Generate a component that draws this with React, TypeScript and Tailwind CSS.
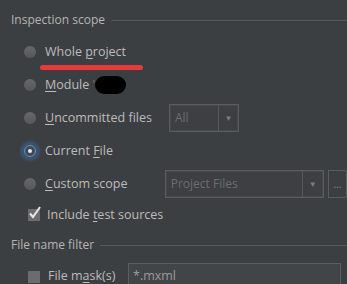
import React from "react";

const font = { fontFamily: '"Open Sans", "Noto Sans", sans-serif' };

function Radio({ selected }: { selected?: boolean }) {
  if (selected) {
    return (
      <div className="relative w-[12px] h-[12px] shrink-0">
        <div className="absolute -inset-[4px] rounded-full bg-[#3a5675] opacity-90 blur-[1px]" />
        <div className="absolute inset-0 rounded-full bg-[#3e4a57] border border-[#6f8fb3] flex items-center justify-center">
          <div className="w-[4px] h-[4px] rounded-full bg-[#e8e8e8]" />
        </div>
      </div>
    );
  }
  return (
    <div className="w-[12px] h-[12px] shrink-0 rounded-full bg-gradient-to-b from-[#666869] to-[#555759]" />
  );
}

function U({ children }: { children: React.ReactNode }) {
  return <span className="underline underline-offset-[2px] decoration-[1px]">{children}</span>;
}

function Dropdown({ label, width, arrowW }: { label: string; width: number; arrowW: number }) {
  return (
    <div
      className="flex h-[28px] border border-[#5a5d60] shadow-[inset_0_0_0_1px_#46494b] bg-[#3d3f42]"
      style={{ width }}
    >
      <div className="flex-1 flex items-center pl-[5px] text-[12px] text-[#6b6d70] border-r border-[#55585b]">
        {label}
      </div>
      <div className="flex items-center justify-center text-[8px] text-[#7a7c7f]" style={{ width: arrowW }}>
        ▼
      </div>
    </div>
  );
}

export default function App() {
  return (
    <div
      className="relative w-[347px] h-[284px] overflow-hidden bg-[#3c3f41] text-[#bcbcbc] text-[12.5px] leading-[16px]"
      style={font}
    >
      {/* Header */}
      <div className="flex items-center pt-[12px] pl-[11px]">
        <span className="text-[12px] text-[#b5b5b5]">Inspection scope</span>
        <div className="flex-1 ml-[6px] h-px bg-[#55585a]" />
      </div>

      <div className="flex flex-col mt-[7px] pl-[24px]">
        <div className="h-[33px] flex items-center gap-[9px]">
          <Radio />
          <span>
            Whole <U>p</U>roject
          </span>
        </div>
        <div className="h-[33px] flex items-center gap-[9px]">
          <Radio />
          <span>
            <U>M</U>odule <span className="text-[#777]">'</span>
          </span>
        </div>
        <div className="h-[33px] flex items-center gap-[9px]">
          <Radio />
          <span className="w-[115px]">
            <U>U</U>ncommitted files
          </span>
          <Dropdown label="All" width={70} arrowW={19} />
        </div>
        <div className="h-[33px] flex items-center gap-[9px]">
          <Radio selected />
          <span>
            Current <U>F</U>ile
          </span>
        </div>
        <div className="h-[33px] flex items-center gap-[9px]">
          <Radio />
          <span className="w-[115px]">
            <U>C</U>ustom scope
          </span>
          <Dropdown label="Project Files" width={165} arrowW={20} />
          <div className="h-[28px] w-[20px] -ml-[5px] border border-[#5a5d60] flex items-center justify-center text-[10px] text-[#888]">
            …
          </div>
        </div>
        <div className="h-[29px] flex items-center gap-[7px] pl-[4px]">
          <div className="relative w-[12px] h-[12px] bg-[#6a6c6e] shrink-0">
            <svg className="absolute -top-[3px] left-0" width="14" height="14" viewBox="0 0 14 14">
              <path d="M2 7.5 L5 11 L12 1" fill="none" stroke="#e6e6e6" strokeWidth="2" />
            </svg>
          </div>
          <span>
            Include <U>t</U>est sources
          </span>
        </div>
      </div>

      {/* File name filter */}
      <div className="flex items-center h-[32px] pl-[11px]">
        <span className="text-[12px] text-[#b5b5b5]">File name filter</span>
        <div className="flex-1 ml-[6px] h-px bg-[#55585a]" />
      </div>

      <div className="flex items-start pl-[28px] pt-[7px] h-[23px]">
        <div className="w-[12px] h-[12px] bg-[#6a6c6e] mt-[3px] shrink-0" />
        <span className="ml-[8px] w-[80px]">
          File m<U>a</U>sk(s)
        </span>
        <div className="-mt-[5px] w-[213px] h-[26px] border border-[#5b5e61] border-b-0 bg-[#424547] pl-[4px] pt-[4px] text-[#9a9a9a]">
          *.mxml
        </div>
      </div>

      {/* annotation overlays */}
      <div className="absolute left-[40px] top-[65px] w-[103px] h-[5px] rounded-full bg-[#e53b3b]" />
      <div className="absolute left-[95px] top-[76px] w-[31px] h-[18px] rounded-[9px] bg-black" />
    </div>
  );
}
